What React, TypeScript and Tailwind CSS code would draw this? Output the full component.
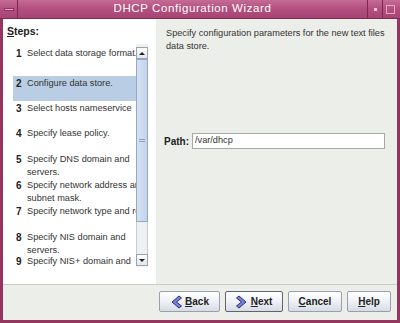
import React from 'react';

const steps: { n: number; lines: string[]; h: string }[] = [
  { n: 1, lines: ['Select data storage format.'], h: 'h-[30px]' },
  { n: 2, lines: ['Configure data store.'], h: 'h-[25px]' },
  { n: 3, lines: ['Select hosts nameservice'], h: 'h-[25px]' },
  { n: 4, lines: ['Specify lease policy.'], h: 'h-[26px]' },
  { n: 5, lines: ['Specify DNS domain and', 'servers.'], h: 'h-[26px]' },
  { n: 6, lines: ['Specify network address and', 'subnet mask.'], h: 'h-[26px]' },
  { n: 7, lines: ['Specify network type and router.'], h: 'h-[26px]' },
  { n: 8, lines: ['Specify NIS domain and', 'servers.'], h: 'h-[24px]' },
  { n: 9, lines: ['Specify NIS+ domain and'], h: 'h-[26px]' },
];

function Chevron({ dir }: { dir: 'left' | 'right' }) {
  const d =
    dir === 'left'
      ? 'M9 1 L2 7 L9 13 L11.5 11 L6.5 7 L11.5 3 Z'
      : 'M3 1 L10 7 L3 13 L0.5 11 L5.5 7 L0.5 3 Z';
  return (
    <svg width="12" height="14" viewBox="0 0 12 14" className="shrink-0">
      <path d={d} fill="#7b7fd6" stroke="#2c2f7a" strokeWidth="1" strokeLinejoin="round" />
    </svg>
  );
}

function WizButton({
  children,
  wide,
  primary,
}: {
  children: React.ReactNode;
  wide: string;
  primary?: boolean;
}) {
  return (
    <button
      className={`${wide} h-[21px] flex items-center justify-center gap-[3px] rounded-[2px] border bg-gradient-to-b from-[#ffffff] via-[#eef1f6] to-[#d6dbe4] text-[10px] font-bold text-[#222] ${
        primary ? 'border-[#5f6470]' : 'border-[#9aa0ab]'
      }`}
    >
      {children}
    </button>
  );
}

export default function App() {
  return (
    <div
      className="w-[400px] h-[323px] flex flex-col bg-[#96365f] overflow-hidden"
      style={{ fontFamily: '"Liberation Sans", Arial, sans-serif' }}
    >
      {/* title bar */}
      <div className="h-[19px] flex items-stretch bg-gradient-to-b from-[#c56b95] via-[#b24f7e] to-[#a64574] border-b border-[#7e2a50]">
        <div className="w-[18px] flex items-center justify-center border-r border-[#7e2a50]">
          <div className="w-[10px] h-[3px] bg-[#e7a9c5] border border-[#8a3460]" />
        </div>
        <div className="flex-1 flex items-center justify-center text-white text-[11.5px] tracking-[0.6px]">
          DHCP Configuration Wizard
        </div>
        <div className="w-[15px] flex items-center justify-center border-l border-[#7e2a50]">
          <div className="w-[3px] h-[3px] bg-[#f1c6d9]" />
        </div>
        <div className="w-[16px] flex items-center justify-center border-l border-[#7e2a50] mr-[2px]">
          <div className="w-[9px] h-[9px] border border-[#e7a9c5]" />
        </div>
      </div>

      {/* body */}
      <div className="flex-1 mx-[3px] mb-[3px] flex flex-col bg-[#eceee9]">
        <div className="h-[266px] flex border-b border-[#c9cbc6]">
          {/* steps panel */}
          <div className="w-[153px] bg-white flex flex-col">
            <div className="pl-[4px] pt-[6px] text-[10.5px] leading-[13px] font-bold text-[#222]">
              <span className="underline">S</span>teps:
            </div>
            <div className="mt-[6px] ml-[10px] w-[135px] h-[223px] flex overflow-hidden">
              <div className="flex-1 flex flex-col pt-[2px] overflow-hidden">
                {steps.map(s => (
                  <div
                    key={s.n}
                    className={`${s.h} shrink-0 flex pl-[3px] pt-[1px] overflow-hidden ${
                      s.n === 2 ? 'bg-[#b9cee4]' : ''
                    }`}
                  >
                    <span className="w-[11px] shrink-0 text-[10px] leading-[13px] font-bold text-[#222]">
                      {s.n}
                    </span>
                    <div className="flex flex-col text-[9.2px] leading-[13px] text-[#333] whitespace-nowrap">
                      {s.lines.map(l => (
                        <span key={l}>{l}</span>
                      ))}
                    </div>
                  </div>
                ))}
              </div>
              {/* scrollbar */}
              <div className="w-[12px] shrink-0 flex flex-col pt-[3px] pb-[1px] bg-[#eef0f2]">
                <div className="h-[12px] flex items-center justify-center border border-[#9aa3b0] bg-gradient-to-b from-white to-[#e2e6ec]">
                  <div className="w-0 h-0 border-l-[3px] border-r-[3px] border-b-[3px] border-l-transparent border-r-transparent border-b-[#222]" />
                </div>
                <div className="h-[163px] flex flex-col items-center justify-center gap-[1px] border border-[#93a9c8] bg-gradient-to-r from-[#d4e1f1] to-[#c3d4ea]">
                  <div className="w-[6px] h-px bg-[#8ea3c2]" />
                  <div className="w-[6px] h-px bg-[#8ea3c2]" />
                </div>
                <div className="flex-1 border-x border-[#c8ccd2] bg-[#eef0f2]" />
                <div className="h-[12px] flex items-center justify-center border border-[#9aa3b0] bg-gradient-to-b from-white to-[#e2e6ec]">
                  <div className="w-0 h-0 border-l-[3px] border-r-[3px] border-t-[3px] border-l-transparent border-r-transparent border-t-[#222]" />
                </div>
              </div>
            </div>
          </div>

          {/* content panel */}
          <div className="flex-1 flex flex-col pl-[10px] pr-[2px] pt-[8px] text-[#333]">
            <div className="text-[9.2px] leading-[13px] whitespace-nowrap">
              Specify configuration parameters for the new text files
              <br />
              data store.
            </div>
            <div className="mt-[80px] flex items-center">
              <span className="text-[10px] font-bold text-[#222] w-[26px] -ml-[2px]">Path:</span>
              <div className="ml-[2px] w-[193px] h-[16px] flex items-center px-[2px] bg-white border border-[#a6a9a4] text-[9.2px] text-[#333]">
                /var/dhcp
              </div>
            </div>
          </div>
        </div>

        {/* button bar */}
        <div className="flex-1 flex items-start justify-end pt-[6px] pr-[6px] gap-[5px]">
          <WizButton wide="w-[61px]">
            <Chevron dir="left" />
            <span>
              <span className="underline">B</span>ack
            </span>
          </WizButton>
          <WizButton wide="w-[58px]" primary>
            <Chevron dir="right" />
            <span>
              <span className="underline">N</span>ext
            </span>
          </WizButton>
          <WizButton wide="w-[54px]">
            <span>
              <span className="underline">C</span>ancel
            </span>
          </WizButton>
          <WizButton wide="w-[44px]">
            <span>
              <span className="underline">H</span>elp
            </span>
          </WizButton>
        </div>
      </div>
    </div>
  );
}
